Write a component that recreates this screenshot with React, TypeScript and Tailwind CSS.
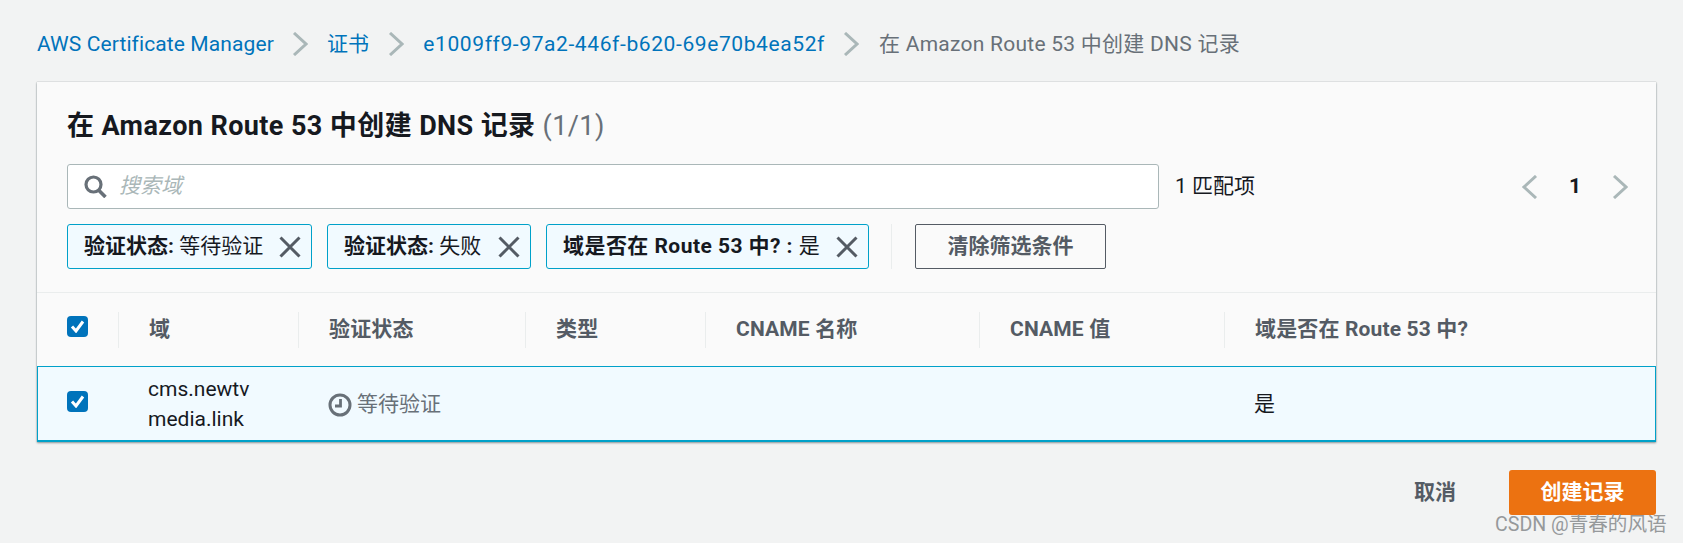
const F = "font-['Roboto','Noto_Sans_CJK_SC',sans-serif]";

function Chevron({ dir = "right", cls = "" }: { dir?: "left" | "right"; cls?: string }) {
  return (
    <svg width="16" height="24" viewBox="0 0 16 24" fill="none" className={cls}>
      <path d={dir === "right" ? "M2 1 L14 12 L2 23" : "M14 1 L2 12 L14 23"} stroke="#aab7b8" strokeWidth="3" />
    </svg>
  );
}

function X() {
  return (
    <svg width="22" height="22" viewBox="0 0 22 22" fill="none" className="shrink-0">
      <path d="M1.5 1.5 L20.5 20.5 M20.5 1.5 L1.5 20.5" stroke="#545b64" strokeWidth="3" />
    </svg>
  );
}

function Check({ cls = "" }: { cls?: string }) {
  return (
    <div className={`w-[21px] h-[21px] rounded-[4px] bg-[#0073bb] flex items-center justify-center ${cls}`}>
      <svg width="15" height="13" viewBox="0 0 15 13" fill="none">
        <path d="M2 6.5 L6 11 L13 1.5" stroke="#fff" strokeWidth="3" />
      </svg>
    </div>
  );
}

function Token({ label, value, w, track = "" }: { label: string; value: string; w: string; track?: string }) {
  return (
    <div className={`${w} h-[45px] border border-[#00a1c9] rounded-[3px] bg-[#f1faff] flex items-center justify-between pl-[16px] pr-[10px] text-[21px] text-[#16191f]`}>
      <span className={`whitespace-nowrap ${track}`}><b className="font-bold">{label}</b> {value}</span>
      <X />
    </div>
  );
}

const cols = ["域", "验证状态", "类型", "CNAME 名称", "CNAME 值", "域是否在 Route 53 中?"];
const grid = "grid grid-cols-[81px_180px_227px_180px_274px_245px_1fr]";

export default function App() {
  return (
    <div className={`${F} w-[1683px] h-[543px] overflow-hidden bg-[#f2f3f3] pl-[37px] pr-[27px] relative`}>
      <nav className="h-[82px] pt-[30px] flex items-start text-[21px] leading-[28px] tracking-[0.2px]">
        <span className="text-[#0073bb] tracking-[0.1px]">AWS Certificate Manager</span>
        <Chevron cls="ml-[18px] mr-[19px] mt-[2px]" />
        <span className="text-[#0073bb]">证书</span>
        <Chevron cls="ml-[19px] mr-[19px] mt-[2px]" />
        <span className="text-[#0073bb] tracking-[0.6px]">e1009ff9-97a2-446f-b620-69e70b4ea52f</span>
        <Chevron cls="ml-[18px] mr-[20px] mt-[2px]" />
        <span className="text-[#687078] tracking-[0.25px]">在 Amazon Route 53 中创建 DNS 记录</span>
      </nav>

      <section className="bg-[#fafafa] shadow-[0_1px_2px_rgba(0,28,36,0.4),0_0_1px_rgba(0,28,36,0.3)]">
        <div className="px-[30px] pt-[26px] pb-[23px] border-b border-[#eaeded]">
          <h1 className="text-[27px] leading-[36px] font-bold text-[#16191f] tracking-[0.4px]">
            在 Amazon Route 53 中创建 DNS 记录 <span className="font-normal text-[#687078]">(1/1)</span>
          </h1>
          <div className="mt-[38px] -translate-y-[18px] flex items-center h-[45px]">
            <div className="w-[1092px] h-[45px] bg-white border border-[#aab7b8] rounded-[3px] flex items-center pl-[16px] gap-[12px]">
              <svg width="23" height="23" viewBox="0 0 23 23" fill="none">
                <circle cx="9.5" cy="9.5" r="7.5" stroke="#687078" strokeWidth="3.2" />
                <path d="M14.5 15 L21.5 22" stroke="#687078" strokeWidth="3.6" />
              </svg>
              <span className="italic text-[21px] text-[#aab7b8]">搜索域</span>
            </div>
            <span className="ml-[16px] text-[21px] text-[#16191f]">1 匹配项</span>
            <div className="ml-auto -mr-[2px] flex items-center">
              <Chevron dir="left" />
              <span className="mx-[31px] text-[21px] font-bold text-[#16191f]">1</span>
              <Chevron />
            </div>
          </div>
          <div className="-mt-[3px] flex items-center gap-[15px]">
            <Token label="验证状态:" value="等待验证" w="w-[245px]" />
            <Token label="验证状态:" value="失败" w="w-[204px]" />
            <Token label="域是否在 Route 53 中? :" value="是" w="w-[323px]" track="tracking-[0.45px]" />
            <div className="ml-[7px] w-px h-[45px] bg-[#eaeded]" />
            <button className="ml-[8px] w-[191px] h-[45px] border border-[#545b64] rounded-[2px] bg-transparent text-[21px] font-bold text-[#545b64]">清除筛选条件</button>
          </div>
        </div>

        <div className={`${grid} h-[73px] items-center`}>
          <div className="pl-[30px]"><Check cls="-translate-y-[3px]" /></div>
          {cols.map((c) => (
            <div key={c} className="h-[36px] border-l border-[#eaeded] pl-[30px] flex items-center text-[21px] font-bold text-[#545b64] whitespace-nowrap tracking-[0.15px]">{c}</div>
          ))}
        </div>

        <div className={`${grid} h-[76px] items-center bg-[#f1faff] border border-b-2 border-[#00a1c9] text-[21px] text-[#16191f]`}>
          <div className="pl-[29px]"><Check cls="-translate-y-[2px]" /></div>
          <div className="pl-[29px] leading-[30px]">cms.newtv<br />media.link</div>
          <div className="pl-[29px] flex items-center gap-[5px] text-[#687078] translate-y-[1px]">
            <svg width="24" height="24" viewBox="0 0 24 24" fill="none">
              <circle cx="12" cy="12" r="10" stroke="#687078" strokeWidth="3" />
              <path d="M12.5 6 V13 H7" stroke="#687078" strokeWidth="2.8" />
            </svg>
            <span>等待验证</span>
          </div>
          <div /><div /><div />
          <div className="pl-[29px] translate-y-[1px]">是</div>
        </div>
      </section>

      <div className="mt-[28px] flex items-center justify-end">
        <span className="mr-[53px] text-[21px] font-bold text-[#545b64]">取消</span>
        <button className="w-[147px] h-[45px] rounded-[3px] bg-[#ec7211] text-white text-[21px] font-bold">创建记录</button>
      </div>

      <span className="absolute left-[1495px] top-[510px] text-[19.6px] text-[#96999b] whitespace-nowrap">CSDN @青春的风语</span>
    </div>
  );
}
